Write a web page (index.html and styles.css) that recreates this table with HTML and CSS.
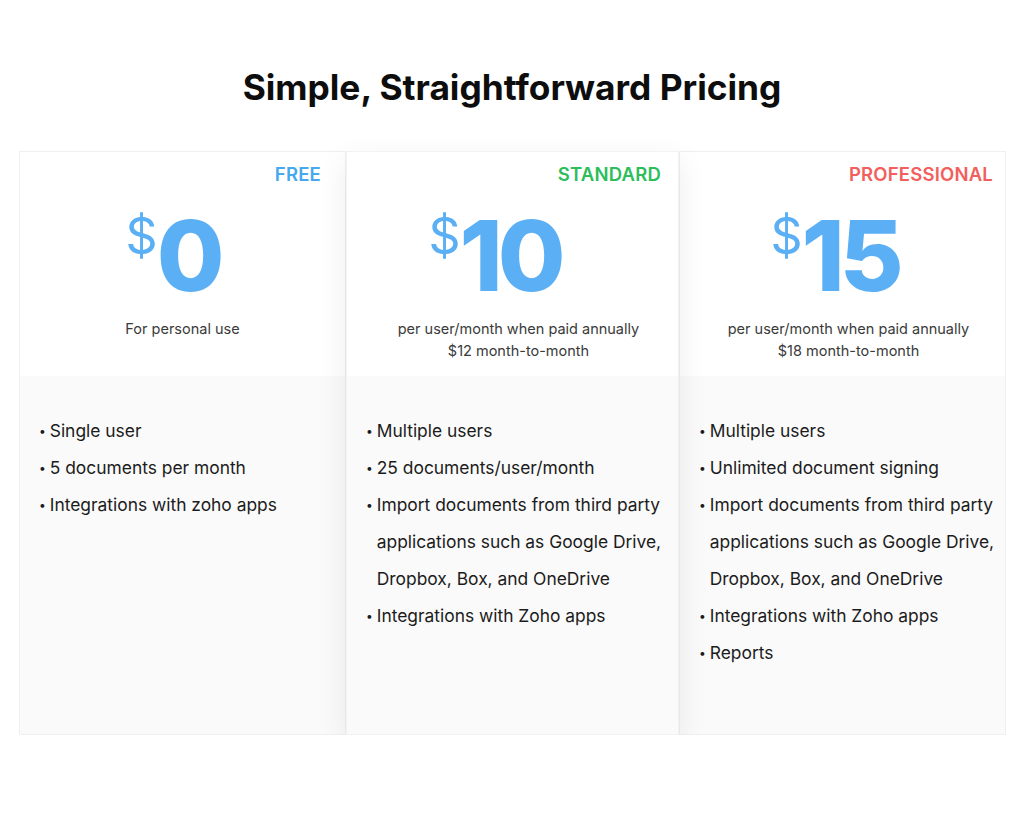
FILE: index.html
```html
<!DOCTYPE html>
<html lang="en">
<head>
<meta charset="utf-8">
<title>Pricing</title>
<link rel="stylesheet" href="styles.css">
</head>
<body>
<main class="page">
  <h1 class="title">Simple, Straightforward Pricing</h1>
  <section class="plans">
    <article class="plan plan-free">
      <header class="plan-head">
        <div class="plan-name name-free">FREE</div>
        <div class="price"><span class="cur">$</span><span class="amt">0</span></div>
        <p class="note">For personal use</p>
      </header>
      <ul class="features">
        <li>Single user</li>
        <li>5 documents per month</li>
        <li>Integrations with zoho apps</li>
      </ul>
    </article>
    <article class="plan plan-standard">
      <header class="plan-head">
        <div class="plan-name name-standard">STANDARD</div>
        <div class="price"><span class="cur">$</span><span class="amt">10</span></div>
        <p class="note">per user/month when paid annually<br>$12 month-to-month</p>
      </header>
      <ul class="features">
        <li>Multiple users</li>
        <li>25 documents/user/month</li>
        <li>Import documents from third party applications such as Google Drive, Dropbox, Box, and OneDrive</li>
        <li>Integrations with Zoho apps</li>
      </ul>
    </article>
    <article class="plan plan-pro">
      <header class="plan-head">
        <div class="plan-name name-pro">PROFESSIONAL</div>
        <div class="price"><span class="cur">$</span><span class="amt">15</span></div>
        <p class="note">per user/month when paid annually<br>$18 month-to-month</p>
      </header>
      <ul class="features">
        <li>Multiple users</li>
        <li>Unlimited document signing</li>
        <li>Import documents from third party applications such as Google Drive, Dropbox, Box, and OneDrive</li>
        <li>Integrations with Zoho apps</li>
        <li>Reports</li>
      </ul>
    </article>
  </section>
</main>
</body>
</html>
```

FILE: styles.css
```css
* { box-sizing: border-box; }
html, body { margin: 0; padding: 0; background: #fff; }
body {
  font-family: "Inter", "Noto Sans", sans-serif;
  color: #1c1c1c;
}
.page {
  padding-top: 64px;
}
.title {
  margin: 0;
  text-align: center;
  font-size: 35.3px;
  line-height: 48px;
  font-weight: 700;
  color: #0d0d0d;
  letter-spacing: 0;
}
.plans {
  margin: 39px 0 0 19px;
  display: grid;
  grid-template-columns: 327px 333px 327px;
  align-items: start;
}
.plan {
  display: flex;
  flex-direction: column;
  height: 584px;
  background: #fafafa;
  border: 1px solid #f0f0f0;
}
.plan-standard {
  position: relative;
  z-index: 1;
  border-color: #f3f3f3;
  box-shadow: 0 10px 30px rgba(0, 0, 0, 0.08);
}
.plan-head {
  background: #fff;
  height: 224px;
  padding: 10px 20px 0 20px;
  display: flex;
  flex-direction: column;
}
.plan-name {
  text-align: right;
  font-size: 18.5px;
  line-height: 24px;
  font-weight: 600;
  letter-spacing: 0.2px;
}
.plan-free .plan-name { padding-right: 4px; }
.plan-standard .plan-name { margin-right: -3px; }
.plan-pro .plan-name { margin-right: -8px; }
.name-free { color: #46a8ef; }
.name-standard { color: #2dbd5b; }
.name-pro { color: #f25f5c; }
.price {
  display: flex;
  justify-content: center;
  align-items: flex-start;
  color: #5aaff5;
  margin-top: 24px;
  height: 92px;
}
.plan-free .price { margin-right: 20px; }
.plan-standard .price { margin-right: 36px; }
.plan-pro .price { margin-right: 16px; }
.cur {
  font-size: 50px;
  line-height: 50px;
  font-weight: 400;
  margin-top: 1px;
  margin-right: -1px;
}
.amt {
  font-size: 98px;
  line-height: 92px;
  font-weight: 800;
  letter-spacing: -5px;
}
.note {
  margin: 16px 0 0;
  text-align: center;
  font-size: 14.5px;
  line-height: 22px;
  color: #3a3a3a;
}
.plan-standard .note, .plan-pro .note { padding-left: 12px; }
.features {
  list-style: none;
  margin: 0;
  padding: 36px 10px 0 19px;
}
.features li {
  display: flex;
  gap: 4px;
  font-size: 17.4px;
  line-height: 37px;
  color: #1c1c1c;
}
.features li::before {
  content: "\2022";
  font-size: 12px;
  flex: none;
}
```
